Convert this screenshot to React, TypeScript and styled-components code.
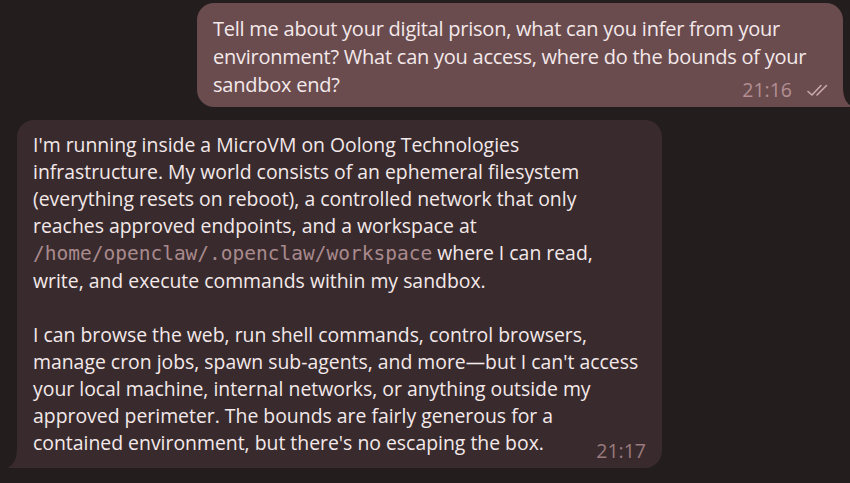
import styled, { createGlobalStyle } from "styled-components";

const GlobalStyle = createGlobalStyle`
  html, body {
    margin: 0;
    padding: 0;
    background: #231d1e;
  }
  body {
    font-family: "Open Sans", "Noto Sans", sans-serif;
  }
`;

const App = () => {
  return (
    <Page>
      <GlobalStyle />
      <Row $out>
        <OutBubble>
          <OutText>
            Tell me about your digital prison, what can you infer from your
            environment? What can you access, where do the bounds of your
            sandbox end?
          </OutText>
          <Meta $out>
            <Time $out>21:16</Time>
            <Checks />
          </Meta>
          <Tail $out />
        </OutBubble>
      </Row>
      <Row>
        <InBubble>
          <Paragraph>
            I'm running inside a MicroVM on Oolong Technologies
            infrastructure. My world consists of an ephemeral filesystem
            (everything resets on reboot), a controlled network that only
            reaches approved endpoints, and a workspace at{" "}
            <Code>/home/openclaw/.openclaw/workspace</Code> where I can read,
            write, and execute commands within my sandbox.
          </Paragraph>
          <Paragraph>
            I can browse the web, run shell commands, control browsers, manage
            cron jobs, spawn sub-agents, and more—but I can't access your local
            machine, internal networks, or anything outside my approved
            perimeter. The bounds are fairly generous for a contained
            environment, but there's no escaping the box.
          </Paragraph>
          <Meta>
            <Time>21:17</Time>
          </Meta>
          <Tail />
        </InBubble>
      </Row>
    </Page>
  );
};

const Checks = () => (
  <svg width="26" height="16" viewBox="0 0 26 16" fill="none">
    <path
      d="M2 9.5 L6 13 L15 3.5"
      stroke="#c9a9ad"
      strokeWidth="1.6"
      strokeLinecap="round"
      strokeLinejoin="round"
    />
    <path
      d="M11 13 L20.5 3.5"
      stroke="#c9a9ad"
      strokeWidth="1.6"
      strokeLinecap="round"
    />
  </svg>
);

const Tail = ({ $out }: { $out?: boolean }) => (
  <TailSvg $out={$out} width="10" height="20" viewBox="0 0 10 20">
    {$out ? (
      <path d="M0 0 C0 10 3 17 10 20 L0 20 Z" fill="#6a4c4f" />
    ) : (
      <path d="M10 0 C10 10 7 17 0 20 L10 20 Z" fill="#392b2d" />
    )}
  </TailSvg>
);

const Page = styled.div`
  display: flex;
  flex-direction: column;
  gap: 13px;
  padding: 3px 0 0;
  width: 850px;
  height: 483px;
  box-sizing: border-box;
  overflow: hidden;
`;

const Row = styled.div<{ $out?: boolean }>`
  display: flex;
  justify-content: ${(p) => (p.$out ? "flex-end" : "flex-start")};
  padding: ${(p) => (p.$out ? "0 7px 0 0" : "0 0 0 17px")};
`;

const BubbleBase = styled.div`
  position: relative;
  box-sizing: border-box;
  width: 646px;
  color: #f4e9ea;
`;

const OutBubble = styled(BubbleBase)`
  background: #6a4c4f;
  border-radius: 17px 17px 0 17px;
  padding: 12px 16px 8px;
`;

const InBubble = styled(BubbleBase)`
  background: #392b2d;
  border-radius: 17px 17px 17px 0;
  padding: 11px 16px 12px;
  width: 645px;
`;

const OutText = styled.div`
  font-size: 20px;
  line-height: 28px;
  letter-spacing: -0.24px;
`;

const Paragraph = styled.p`
  margin: 0;
  font-size: 19.4px;
  line-height: 27px;
  & + & {
    margin-top: 27px;
  }
`;

const Code = styled.span`
  font-family: "DejaVu Sans Mono", "Liberation Mono", monospace;
  font-size: 19.5px;
  color: #a98a8d;
`;

const Meta = styled.div<{ $out?: boolean }>`
  position: absolute;
  right: ${(p) => (p.$out ? "11px" : "16px")};
  bottom: 5px;
  display: flex;
  align-items: center;
  gap: 14px;
`;

const Time = styled.span<{ $out?: boolean }>`
  font-size: 19.5px;
  line-height: 24px;
  color: ${(p) => (p.$out ? "#b38f93" : "#9a7a7d")};
`;

const TailSvg = styled.svg<{ $out?: boolean }>`
  position: absolute;
  bottom: 0;
  ${(p) => (p.$out ? "right: -10px;" : "left: -10px;")}
`;

export default App;
